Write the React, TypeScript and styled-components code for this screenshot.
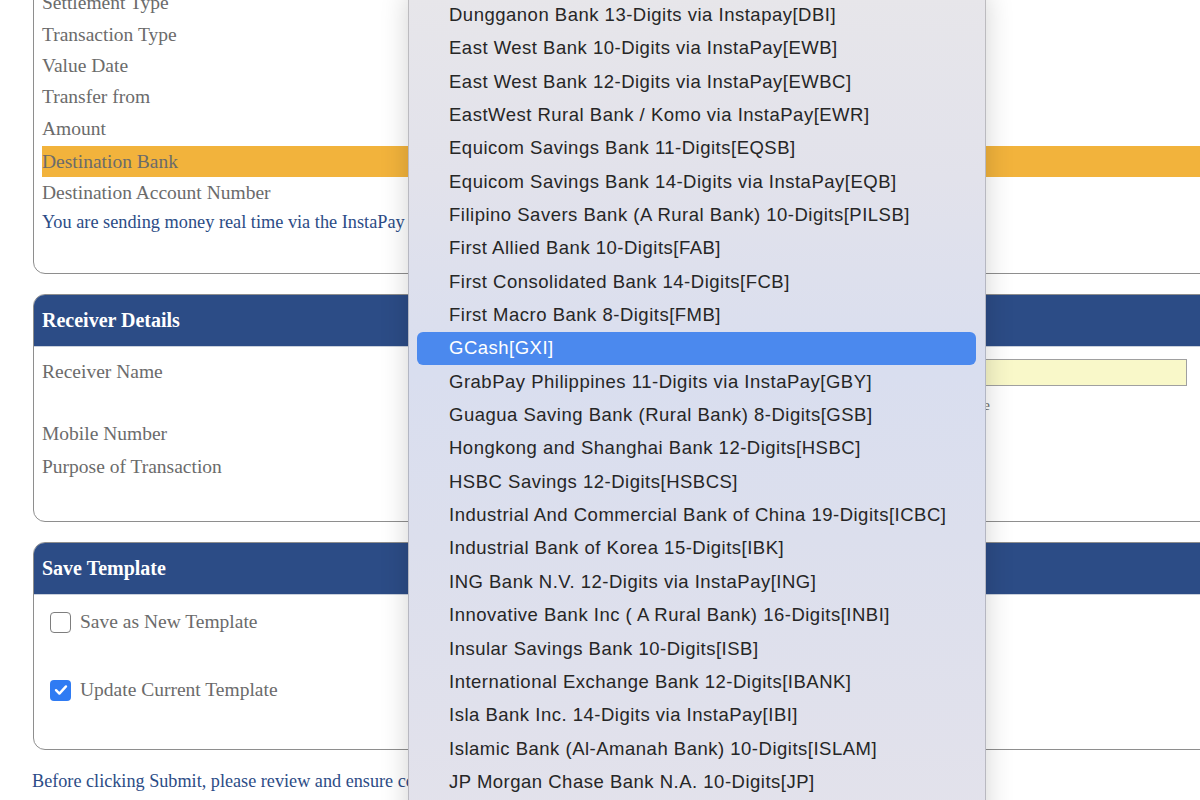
import React from 'react';
import styled, { createGlobalStyle } from 'styled-components';

const GlobalStyle = createGlobalStyle`
  html, body {
    margin: 0;
    padding: 0;
    background: #fff;
    overflow: hidden;
  }
  body {
    font-family: "Liberation Serif", "Times New Roman", serif;
  }
`;

const banks = [
  'Dungganon Bank 13-Digits via Instapay[DBI]',
  'East West Bank 10-Digits via InstaPay[EWB]',
  'East West Bank 12-Digits via InstaPay[EWBC]',
  'EastWest Rural Bank / Komo via InstaPay[EWR]',
  'Equicom Savings Bank 11-Digits[EQSB]',
  'Equicom Savings Bank 14-Digits via InstaPay[EQB]',
  'Filipino Savers Bank (A Rural Bank) 10-Digits[PILSB]',
  'First Allied Bank 10-Digits[FAB]',
  'First Consolidated Bank 14-Digits[FCB]',
  'First Macro Bank 8-Digits[FMB]',
  'GCash[GXI]',
  'GrabPay Philippines 11-Digits via InstaPay[GBY]',
  'Guagua Saving Bank (Rural Bank) 8-Digits[GSB]',
  'Hongkong and Shanghai Bank 12-Digits[HSBC]',
  'HSBC Savings 12-Digits[HSBCS]',
  'Industrial And Commercial Bank of China 19-Digits[ICBC]',
  'Industrial Bank of Korea 15-Digits[IBK]',
  'ING Bank N.V. 12-Digits via InstaPay[ING]',
  'Innovative Bank Inc ( A Rural Bank) 16-Digits[INBI]',
  'Insular Savings Bank 10-Digits[ISB]',
  'International Exchange Bank 12-Digits[IBANK]',
  'Isla Bank Inc. 14-Digits via InstaPay[IBI]',
  'Islamic Bank (Al-Amanah Bank) 10-Digits[ISLAM]',
  'JP Morgan Chase Bank N.A. 10-Digits[JP]',
  'Keppel Bank Philippines 10-Digits[KEB]',
];

const transferRows = [
  { label: 'Settlement Type', h: 32 },
  { label: 'Transaction Type', h: 31 },
  { label: 'Value Date', h: 31 },
  { label: 'Transfer from', h: 31 },
  { label: 'Amount', h: 34 },
  { label: 'Destination Bank', h: 31, active: true },
  { label: 'Destination Account Number', h: 31 },
];

const App = () => {
  return (
    <Page>
      <GlobalStyle />
      <Content>
        <Panel>
          <PanelHeader>Transfer Details</PanelHeader>
          <PanelBody $top={8} $bottom={37}>
            {transferRows.map((r) => (
              <FormRow key={r.label} $h={r.h} $active={r.active}>
                <Label>{r.label}</Label>
                <span />
              </FormRow>
            ))}
            <Notice>
              You are sending money real time via the InstaPay network. Please make sure all details are correct.
            </Notice>
          </PanelBody>
        </Panel>

        <Panel>
          <PanelHeader>Receiver Details</PanelHeader>
          <PanelBody $top={9} $bottom={38}>
            <TallRow>
              <Label>Receiver Name</Label>
              <FieldCol>
                <TextBox />
                <Hint>Name must match the name registered with the destination bank or e-wallet profile</Hint>
              </FieldCol>
            </TallRow>
            <FormRow $h={32}>
              <Label>Mobile Number</Label>
              <span />
            </FormRow>
            <FormRow $h={33}>
              <Label>Purpose of Transaction</Label>
              <span />
            </FormRow>
          </PanelBody>
        </Panel>

        <Panel>
          <PanelHeader>Save Template</PanelHeader>
          <CheckList>
            <CheckRow>
              <Box $checked={false} />
              <CheckLabel>Save as New Template</CheckLabel>
            </CheckRow>
            <CheckRow>
              <Box $checked>
                <svg width="14" height="12" viewBox="0 0 14 12" fill="none">
                  <path d="M2 6.2 L5.4 9.6 L12 2.4" stroke="#fff" strokeWidth="2.4" strokeLinecap="round" strokeLinejoin="round" />
                </svg>
              </Box>
              <CheckLabel>Update Current Template</CheckLabel>
            </CheckRow>
          </CheckList>
        </Panel>

        <Footnote>
          Before clicking Submit, please review and ensure correctness of all the details you have entered.
        </Footnote>
      </Content>

      <Menu>
        {banks.map((b) => (
          <MenuItem key={b} $selected={b === 'GCash[GXI]'}>
            {b}
          </MenuItem>
        ))}
      </Menu>
    </Page>
  );
};

export default App;

const Page = styled.div`
  position: relative;
  width: 1400px;
  height: 800px;
  overflow: hidden;
`;

const Content = styled.div`
  display: flex;
  flex-direction: column;
  gap: 20px;
  padding-left: 33px;
  margin-top: -74px;
`;

const Panel = styled.div`
  border: 1px solid #8e8e8e;
  border-radius: 12px;
  overflow: hidden;
  background: #fff;
`;

const PanelHeader = styled.div`
  box-sizing: border-box;
  height: 52px;
  display: flex;
  align-items: center;
  padding-left: 8px;
  background: #2c4c86;
  border-bottom: 1px solid #c9d0dc;
  color: #fff;
  font-size: 20px;
  font-weight: 700;
`;

const PanelBody = styled.div<{ $top: number; $bottom: number }>`
  padding: ${({ $top }) => $top}px 0 ${({ $bottom }) => $bottom}px 8px;
`;

const FormRow = styled.div<{ $h: number; $active?: boolean }>`
  display: grid;
  grid-template-columns: 380px 1fr;
  align-items: center;
  height: ${({ $h }) => $h}px;
  background: ${({ $active }) => ($active ? '#f2b33c' : 'transparent')};
`;

const Label = styled.div`
  font-size: 19.5px;
  line-height: 32px;
  color: #6b6b6b;
  white-space: nowrap;
`;

const Notice = styled.div`
  height: 28px;
  display: flex;
  align-items: center;
  font-size: 18.3px;
  color: #2c4c86;
  white-space: nowrap;
`;

const TallRow = styled.div`
  display: grid;
  grid-template-columns: 380px 1fr;
  align-items: start;
  padding-bottom: 3px;
`;

const FieldCol = styled.div`
  display: flex;
  flex-direction: column;
  padding-top: 3px;
`;

const TextBox = styled.div`
  box-sizing: border-box;
  width: 765px;
  height: 27px;
  border: 1px solid #a0a0a0;
  background: #f9f8c9;
`;

const Hint = styled.div`
  width: 568px;
  margin-top: 9px;
  font-size: 15px;
  line-height: 20px;
  color: #6b6b6b;
  text-align: right;
  white-space: nowrap;
  overflow: hidden;
  direction: rtl;
`;

const CheckList = styled.div`
  display: flex;
  flex-direction: column;
  gap: 34px;
  padding: 10px 0 42px 16px;
`;

const CheckRow = styled.div`
  display: flex;
  align-items: center;
  gap: 9px;
  height: 34px;
`;

const Box = styled.span<{ $checked: boolean }>`
  box-sizing: border-box;
  width: 21px;
  height: 21px;
  border-radius: 4px;
  display: flex;
  align-items: center;
  justify-content: center;
  border: ${({ $checked }) => ($checked ? 'none' : '1.5px solid #7e7e7e')};
  background: ${({ $checked }) => ($checked ? '#2f7bf3' : '#fff')};
`;

const CheckLabel = styled.span`
  font-size: 19.5px;
  color: #6b6b6b;
`;

const Footnote = styled.div`
  margin-left: -1px;
  font-size: 18.2px;
  line-height: 22px;
  color: #2c4c86;
  white-space: nowrap;
`;

const Menu = styled.div`
  position: absolute;
  left: 408px;
  top: -8px;
  width: 578px;
  height: 840px;
  box-sizing: border-box;
  padding-top: 5.3px;
  border: 1px solid rgba(0, 0, 0, 0.18);
  border-radius: 6px;
  background: linear-gradient(
    180deg,
    #e7e6ea 0%,
    #e2e2eb 22%,
    #d9deef 45%,
    #dcdfed 65%,
    #e3e2eb 100%
  );
  box-shadow: 0 0 28px rgba(0, 0, 0, 0.18);
  font-family: "Liberation Sans", Arial, sans-serif;
`;

const MenuItem = styled.div<{ $selected?: boolean }>`
  height: 33.35px;
  margin: 0 9px 0 8px;
  padding-left: 32px;
  display: flex;
  align-items: center;
  border-radius: 6px;
  font-size: 18.5px;
  letter-spacing: 0.5px;
  white-space: nowrap;
  color: ${({ $selected }) => ($selected ? '#fff' : '#262626')};
  background: ${({ $selected }) => ($selected ? '#4b89ee' : 'transparent')};
`;
